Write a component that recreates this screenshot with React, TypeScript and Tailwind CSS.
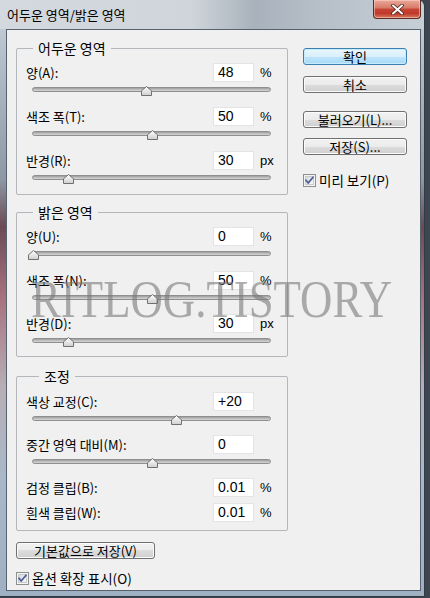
import React from "react";

const KR = "font-['Noto_Sans_CJK_KR','Noto_Sans',sans-serif]";

function Thumb({ left }: { left: number }) {
  return (
    <svg
      className="absolute top-[-1px]"
      style={{ left }}
      width="11"
      height="10"
      viewBox="0 0 11 10"
    >
      <defs>
        <linearGradient id="tg" x1="0" y1="0" x2="0" y2="1">
          <stop offset="0" stopColor="#ffffff" />
          <stop offset="1" stopColor="#cfcfcf" />
        </linearGradient>
      </defs>
      <path d="M5.5 0.5 L10.5 4.8 L10.5 9.5 L0.5 9.5 L0.5 4.8 Z" fill="url(#tg)" stroke="#707070" strokeWidth="1" strokeLinejoin="round" />
    </svg>
  );
}

function Slider({ left }: { left: number }) {
  return (
    <div className="relative mt-[5px] ml-[15px] w-[239px] h-[10px]">
      <div className="mt-[2px] h-[5px] rounded-full border border-[#8f8f8f] bg-[linear-gradient(180deg,#9c9c9c_0%,#bdbdbd_50%,#d6d6d6_100%)]" />
      <Thumb left={left} />
    </div>
  );
}

function Field({ label, value, unit }: { label: string; value: string; unit?: string }) {
  return (
    <div className="flex items-center h-[19px]">
      <div className="pl-[9px] w-[196px] text-[13px] leading-[19px] text-black">{label}</div>
      <div className="w-[41px] h-[19px] bg-white border border-[#e4e4e4] pl-[4px] text-[14px] leading-[17px] text-black font-['Liberation_Sans',sans-serif]">
        {value}
      </div>
      {unit && <div className="ml-[6px] text-[13px] leading-[19px] text-black font-['Liberation_Sans',sans-serif]">{unit}</div>}
    </div>
  );
}

function Group({ title, className, children, legendLeft }: { title: string; className: string; children: React.ReactNode; legendLeft: string }) {
  return (
    <div className={`relative w-[272px] border border-[#b3b7bb] rounded-[2px] ${className}`}>
      <span className={`absolute -top-[11px] ${legendLeft} bg-[#f0f0f0] px-[5px] text-[14px] leading-[20px] text-black`}>{title}</span>
      {children}
    </div>
  );
}

function Button({ children, primary, className }: { children: React.ReactNode; primary?: boolean; className?: string }) {
  return (
    <div
      className={`flex items-center justify-center h-[17px] rounded-[3px] border text-[13px] leading-[15px] text-black ${
        primary
          ? "border-[#3c7fb1] bg-[linear-gradient(180deg,#eaf6fd_0%,#d9f0fc_50%,#bee6fd_50%,#a7d9f5_100%)] shadow-[inset_0_0_0_1px_#c6ecfb]"
          : "border-[#707070] bg-[linear-gradient(180deg,#f2f2f2_0%,#ebebeb_50%,#dddddd_50%,#cfcfcf_100%)] shadow-[inset_0_0_0_1px_#fbfbfb]"
      } ${className ?? ""}`}
    >
      {children}
    </div>
  );
}

function Checkbox() {
  return (
    <svg width="13" height="13" viewBox="0 0 13 13" className="shrink-0">
      <defs>
        <linearGradient id="cb" x1="0" y1="0" x2="1" y2="1">
          <stop offset="0" stopColor="#d5d7da" />
          <stop offset="1" stopColor="#fbfbfb" />
        </linearGradient>
      </defs>
      <rect x="0.5" y="0.5" width="12" height="12" fill="#f4f4f4" stroke="#8e8f8f" />
      <rect x="2.5" y="2.5" width="8" height="8" fill="url(#cb)" stroke="#c8cacc" strokeWidth="1" />
      <path d="M3 6.2 L5.2 9 L10 3.2" fill="none" stroke="#4a5f97" strokeWidth="1.8" strokeLinecap="round" strokeLinejoin="round" />
    </svg>
  );
}

export default function App() {
  return (
    <div className={`relative w-[430px] h-[598px] overflow-hidden bg-[#3d4650] ${KR}`}>
      {/* window frame */}
      <div className="w-[425px] h-[597px] rounded-tr-[7px] border-r border-b border-[#2f3a45] bg-[linear-gradient(180deg,#cfd5dc_0%,#b8c2cc_8%,#8e99a5_30%,#6b4a55_38%,#a8727f_50%,#b7aeb6_65%,#a9b8c8_80%,#9fb0c2_100%)] flex flex-col">
        <div className="relative h-[29px] bg-[linear-gradient(90deg,#d4d9df_0%,#cfd5db_45%,#a9b2bc_60%,#b6bfc8_75%,#c6ced6_100%)] flex items-center pl-[7px] rounded-tr-[7px]">
          <span className="text-[13px] leading-[16px] text-black">어두운 영역/밝은 영역</span>
          <div className="absolute top-0 right-[3px] w-[48px] h-[19px] rounded-b-[4px] border border-t-0 border-[#5e2a24] bg-[linear-gradient(180deg,#e9a99a_0%,#d77a68_45%,#c74535_50%,#c0392a_75%,#d87a5e_100%)] flex items-center justify-center shadow-[inset_0_0_0_1px_rgba(255,220,210,0.5)]">
            <svg width="13" height="11" viewBox="0 0 13 11">
              <path d="M2 1.5 L11 9.5 M11 1.5 L2 9.5" stroke="#4a1f18" strokeWidth="3.6" strokeLinecap="round" />
              <path d="M2 1.5 L11 9.5 M11 1.5 L2 9.5" stroke="#ffffff" strokeWidth="2" strokeLinecap="round" />
            </svg>
          </div>
        </div>

        {/* client area */}
        <div className="ml-[6px] w-[415px] h-[562px] border border-[#56636f] bg-[#f0f0f0] flex">
          <div className="pl-[9px] pt-[18px] flex flex-col">
            <Group title="어두운 영역" className="h-[147px] pt-[14px]" legendLeft="left-[16px]">
              <Field label="양(A):" value="48" unit="%" />
              <Slider left={109} />
              <div className="mt-[10px]" />
              <Field label="색조 폭(T):" value="50" unit="%" />
              <Slider left={115} />
              <div className="mt-[10px]" />
              <Field label="반경(R):" value="30" unit="px" />
              <Slider left={31} />
            </Group>

            <Group title="밝은 영역" className="h-[145px] pt-[14px] mt-[17px]" legendLeft="left-[16px]">
              <Field label="양(U):" value="0" unit="%" />
              <Slider left={-4} />
              <div className="mt-[10px]" />
              <Field label="색조 폭(N):" value="50" unit="%" />
              <Slider left={115} />
              <div className="mt-[9px]" />
              <Field label="반경(D):" value="30" unit="px" />
              <Slider left={31} />
            </Group>

            <Group title="조정" className="h-[155px] pt-[15px] mt-[19px]" legendLeft="left-[22px]">
              <Field label="색상 교정(C):" value="+20" />
              <Slider left={139} />
              <div className="mt-[9px]" />
              <Field label="중간 영역 대비(M):" value="0" />
              <Slider left={115} />
              <div className="mt-[9px]" />
              <Field label="검정 클립(B):" value="0.01" unit="%" />
              <div className="mt-[6px]" />
              <Field label="흰색 클립(W):" value="0.01" unit="%" />
            </Group>

            <Button className="mt-[11px] w-[139px]">기본값으로 저장(V)</Button>
            <div className="mt-[11px] flex items-center gap-[3px]">
              <Checkbox />
              <span className="text-[13.5px] leading-[16px] text-black">옵션 확장 표시(O)</span>
            </div>
          </div>

          <div className="ml-[15px] pt-[18px] flex flex-col w-[104px]">
            <Button primary>확인</Button>
            <Button className="mt-[11px]">취소</Button>
            <Button className="mt-[18px]">불러오기(L)...</Button>
            <Button className="mt-[10px]">저장(S)...</Button>
            <div className="mt-[17px] flex items-center gap-[3px]">
              <Checkbox />
              <span className="text-[13.5px] leading-[16px] text-black">미리 보기(P)</span>
            </div>
          </div>
        </div>
      </div>

      {/* watermark */}
      <div className="pointer-events-none absolute left-[31px] top-[273px] origin-left scale-x-[0.845] whitespace-nowrap font-['Liberation_Serif',serif] text-[53px] leading-none text-[rgba(120,120,120,0.6)]">
        RITLOG.TISTORY
      </div>
    </div>
  );
}
